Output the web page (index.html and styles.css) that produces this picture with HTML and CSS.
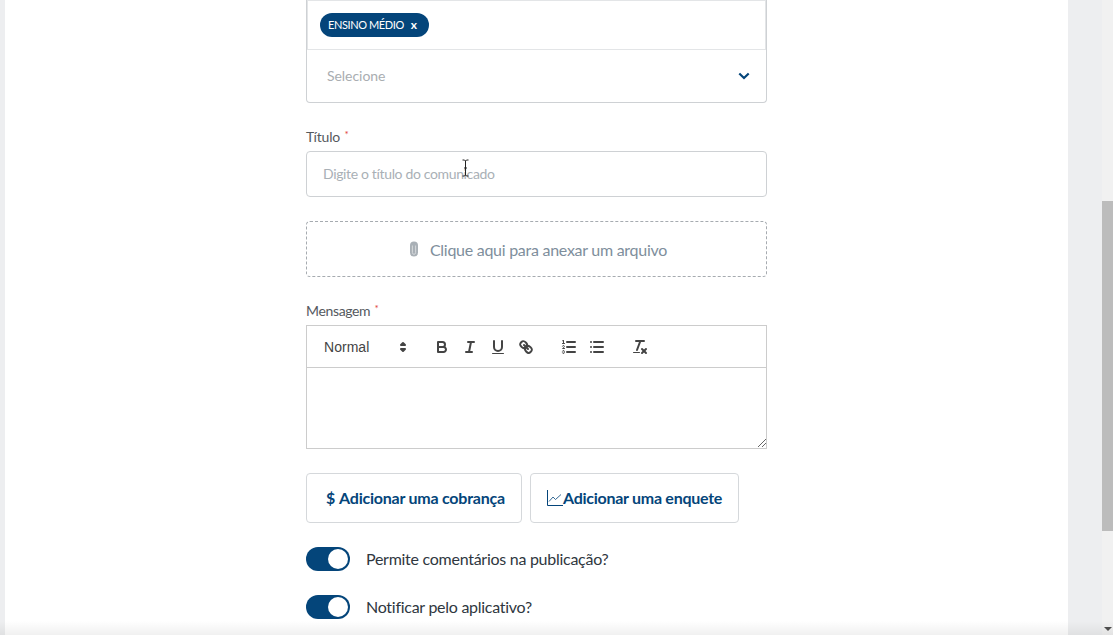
FILE: index.html
```html
<!DOCTYPE html>
<html lang="pt-BR">
<head>
<meta charset="utf-8">
<title>Comunicado</title>
<link rel="stylesheet" href="styles.css">
</head>
<body>
<div class="page">
  <div class="gutter"></div>
  <main class="panel">
    <form class="form">
      <div class="multi">
        <div class="chips">
          <span class="chip">ENSINO MÉDIO <b class="chip-x">x</b></span>
        </div>
        <div class="select">
          <span class="select-text">Selecione</span>
          <svg class="chev" width="12" height="8" viewBox="0 0 12 8"><path d="M1.3 1.5 6 6l4.7-4.5" fill="none" stroke="#04457a" stroke-width="2.2"/></svg>
        </div>
      </div>

      <label class="label label-titulo">Título <sup class="req">*</sup></label>
      <div class="input">Digite o título do comunicado</div>

      <div class="drop">
        <svg class="clip" width="10" height="16" viewBox="0 0 10 16"><path d="M1 4.5a4 4 0 0 1 8 0v7a4 4 0 0 1-8 0z" fill="#a9b0b6"/><path d="M3.4 4.5v7.2a1.6 1.6 0 0 0 3.2 0V4.5" fill="none" stroke="#d5d8db" stroke-width="1"/></svg>
        <span>Clique aqui para anexar um arquivo</span>
      </div>

      <label class="label label-msg">Mensagem <sup class="req">*</sup></label>
      <div class="editor">
        <div class="toolbar">
          <span class="picker">
            <span class="picker-label">Normal</span>
            <svg class="ql" width="18" height="18" viewBox="0 0 18 18"><polygon class="s" points="7 11 9 13 11 11 7 11"/><polygon class="s" points="7 7 9 5 11 7 7 7"/></svg>
          </span>
          <span class="group">
            <span class="btn"><svg class="ql" viewBox="0 0 18 18"><path class="s" d="M5,4H9.5A2.5,2.5,0,0,1,12,6.5v0A2.5,2.5,0,0,1,9.5,9H5A0,0,0,0,1,5,9V4A0,0,0,0,1,5,4Z"/><path class="s" d="M5,9h5.5A2.5,2.5,0,0,1,13,11.5v0A2.5,2.5,0,0,1,10.5,14H5a0,0,0,0,1,0,0V9A0,0,0,0,1,5,9Z"/></svg></span>
            <span class="btn"><svg class="ql" viewBox="0 0 18 18"><line class="s" x1="7" x2="13" y1="4" y2="4"/><line class="s" x1="5" x2="11" y1="14" y2="14"/><line class="s" x1="8" x2="10" y1="14" y2="4"/></svg></span>
            <span class="btn"><svg class="ql" viewBox="0 0 18 18"><path class="s" d="M5,3V9a4.012,4.012,0,0,0,4,4H9a4.012,4.012,0,0,0,4-4V3"/><rect class="f" height="1" rx="0.5" ry="0.5" width="12" x="3" y="15"/></svg></span>
            <span class="btn"><svg class="ql" viewBox="0 0 18 18"><line class="s" x1="7" x2="11" y1="7" y2="11"/><path class="s" d="M8.9,4.577a3.476,3.476,0,0,1,.36,4.679A3.476,3.476,0,0,1,4.577,8.9C3.185,7.5,2.035,6.4,4.217,4.217S7.5,3.185,8.9,4.577Z"/><path class="s" d="M13.423,9.1a3.476,3.476,0,0,0-4.679-.36,3.476,3.476,0,0,0,.36,4.679c1.392,1.392,2.5,2.542,4.679.36S14.815,10.5,13.423,9.1Z"/></svg></span>
          </span>
          <span class="group">
            <span class="btn"><svg class="ql" viewBox="0 0 18 18"><line class="s" x1="7" x2="15" y1="4" y2="4"/><line class="s" x1="7" x2="15" y1="9" y2="9"/><line class="s" x1="7" x2="15" y1="14" y2="14"/><line class="s thin" x1="2.5" x2="4.5" y1="5.5" y2="5.5"/><path class="f" d="M3.5,6A0.5,0.5,0,0,1,3,5.5V3.085l-0.276.138A0.5,0.5,0,0,1,2.053,3c-0.124-.247-0.023-0.324.224-0.447l1-.5A0.5,0.5,0,0,1,4,2.5v3A0.5,0.5,0,0,1,3.5,6Z"/><path class="s thin" d="M4.5,10.5h-2c0-.234,1.85-1.076,1.85-2.234A0.959,0.959,0,0,0,2.5,8.156"/><path class="s thin" d="M2.5,14.846a0.959,0.959,0,0,0,1.85-.109A0.7,0.7,0,0,0,3.75,14a0.688,0.688,0,0,0,.6-0.736,0.959,0.959,0,0,0-1.85-.109"/></svg></span>
            <span class="btn"><svg class="ql" viewBox="0 0 18 18"><line class="s" x1="6" x2="15" y1="4" y2="4"/><line class="s" x1="6" x2="15" y1="9" y2="9"/><line class="s" x1="6" x2="15" y1="14" y2="14"/><line class="s" x1="3" x2="3" y1="4" y2="4"/><line class="s" x1="3" x2="3" y1="9" y2="9"/><line class="s" x1="3" x2="3" y1="14" y2="14"/></svg></span>
          </span>
          <span class="group">
            <span class="btn"><svg class="ql" viewBox="0 0 18 18"><line class="s" x1="5" x2="13" y1="3" y2="3"/><line class="s" x1="6" x2="9.35" y1="12" y2="3"/><line class="s" x1="11" x2="15" y1="11" y2="15"/><line class="s" x1="15" x2="11" y1="11" y2="15"/><rect class="f" height="1" rx="0.5" ry="0.5" width="7" x="2" y="14"/></svg></span>
          </span>
        </div>
        <div class="editor-body"><span class="grip"></span></div>
      </div>

      <div class="actions">
        <button type="button" class="action action-pay"><span class="dollar">$</span> Adicionar uma cobrança</button>
        <button type="button" class="action action-poll"><svg class="chart" width="16" height="16" viewBox="0 0 16 16"><path d="M.5 0v15.5H16" fill="none" stroke="#04457a"/><path d="M2 11.5 6 7l2.5 2.5L14 4.5" fill="none" stroke="#04457a" stroke-width=".8"/></svg>Adicionar uma enquete</button>
      </div>

      <div class="toggle-row toggle-first">
        <span class="toggle"><span class="knob"></span></span>
        <span class="toggle-text">Permite comentários na publicação?</span>
      </div>
      <div class="toggle-row">
        <span class="toggle"><span class="knob"></span></span>
        <span class="toggle-text">Notificar pelo aplicativo?</span>
      </div>
    </form>
  </main>
  <div class="side">
    <div class="scrollbar">
      <div class="thumb"></div>
      <div class="arrow"></div>
    </div>
  </div>
  <svg class="cursor" width="9" height="18" viewBox="0 0 9 18"><path d="M1.5 1h2l1 1 1-1h2M4.5 2v14M1.5 17h2l1-1 1 1h2M3 9h3" fill="none" stroke="#222" stroke-width="1"/></svg>
  <div class="fade"></div>
</div>
</body>
</html>
```
FILE: styles.css
```css
* { box-sizing: border-box; }
html, body { margin: 0; height: 100%; overflow: hidden; }
body { font-family: "Lato", "Noto Sans", sans-serif; font-size: 16px; color: #333; background: #fff; }

.page { position: relative; display: flex; width: 1113px; height: 635px; overflow: hidden; }
.gutter { width: 5px; background: #edeef0; }
.panel { width: 1063px; background: #fff; padding-left: 301px; }
.side { flex: 1; display: flex; justify-content: flex-end; background: #edeef0; }

.form { width: 461px; }

.multi { height: 103px; border: 1px solid #ced1d4; border-top: 0; border-radius: 0 0 4px 4px; }
.chips { height: 50px; padding: 12px 0 0 12px; border: 1px solid #e3e5e7; }
.chip { display: inline-flex; align-items: center; height: 24px; padding: 0 12px 1px 8px; border-radius: 12px; background: #04457a; color: #fff; font-size: 11px; letter-spacing: -.4px; }
.chip-x { margin-left: 7px; font-weight: 700; font-size: 12px; }
.select { display: flex; align-items: center; justify-content: space-between; height: 52px; padding: 0 16px 2px 20px; }
.select-text { color: #a9adb1; font-size: 14px; letter-spacing: -.05px; }
.chev { display: block; margin-top: 2px; }

.label { display: block; color: #55595e; font-size: 14px; line-height: 18px; letter-spacing: -.2px; }
.label-titulo { margin-top: 25px; height: 23px; }
.label-msg { margin-top: 25px; height: 23px; letter-spacing: -.35px; }
.req { color: #e0413a; font-size: 10px; line-height: 0; vertical-align: 4px; margin-left: 1px; }

.input { height: 46px; border: 1px solid #ced1d4; border-radius: 4px; padding: 0 16px 2px; display: flex; align-items: center; color: #a9b0b6; font-size: 14px; letter-spacing: -.35px; }

.drop { display: flex; align-items: center; justify-content: center; gap: 11px; height: 56px; margin-top: 24px; padding-left: 3px; border: 1px dashed #a6abb0; border-radius: 4px; color: #7e8e9c; font-size: 16px; letter-spacing: -.27px; }
.clip { display: block; }

.editor { height: 124px; }
.toolbar { display: flex; align-items: flex-start; height: 43px; padding: 9px 8px 0; border: 1px solid #ccc; font-family: "Liberation Sans", Arial, sans-serif; font-size: 14px; font-weight: 500; color: #444; }
.picker { display: flex; align-items: center; justify-content: space-between; width: 98px; height: 24px; padding-left: 9px; margin-right: 15px; }
.picker-label { letter-spacing: .03px; }
.picker svg { width: 18px; height: 18px; margin-right: 1px; }
.group { display: flex; margin-right: 15px; }
.btn { width: 28px; height: 24px; padding: 3px 5px; }
.ql { display: block; width: 18px; height: 18px; }
.s { fill: none; stroke: #444; stroke-width: 2; stroke-linecap: round; stroke-linejoin: round; }
.s.thin { stroke-width: 1; }
.f { fill: #444; }
.editor-body { position: relative; height: 81px; border: 1px solid #ccc; border-top: 0; }
.grip { position: absolute; right: 0; bottom: 1px; width: 8px; height: 8px; background: linear-gradient(135deg, transparent 46%, #666 46%, #666 54%, transparent 54%, transparent 72%, #666 72%, #666 80%, transparent 80%); }

.actions { display: flex; gap: 8px; margin-top: 24px; }
.action { display: flex; align-items: center; height: 50px; background: #fff; border: 1px solid #d5d8db; border-radius: 4px; color: #04457a; font-family: inherit; font-size: 16px; font-weight: 700; white-space: nowrap; letter-spacing: -.27px; padding-bottom: 2px; }
.action-pay { width: 216px; padding-left: 19px; padding-right: 0; letter-spacing: -.23px; }
.dollar { margin-right: 4px; }
.action-poll { width: 209px; padding-left: 16px; padding-right: 0; }
.chart { display: block; margin-top: 1px; }

.toggle-row { display: flex; align-items: center; gap: 16px; height: 24px; margin-top: 24px; }
.toggle { display: flex; align-items: center; justify-content: flex-end; width: 44px; height: 24px; padding-right: 2px; border-radius: 12px; background: #04457a; }
.knob { width: 20px; height: 20px; border-radius: 50%; background: #fff; }
.toggle-text { color: #2f3740; font-size: 16px; letter-spacing: -.27px; margin-top: -2px; }

.scrollbar { position: relative; width: 11px; height: 100%; background: #f1f1f1; }
.thumb { position: absolute; top: 201px; left: 0; width: 11px; height: 330px; background: #bcbcbc; }
.arrow { position: absolute; bottom: 4px; left: 2px; width: 0; height: 0; border: 4px solid transparent; border-top: 4px solid #505050; border-bottom: 0; }

.cursor { position: absolute; left: 461px; top: 159px; }
.fade { position: absolute; left: 0; right: 0; bottom: 0; height: 14px; background: linear-gradient(to bottom, rgba(0,0,0,0), rgba(0,0,0,.06)); pointer-events: none; }
```
